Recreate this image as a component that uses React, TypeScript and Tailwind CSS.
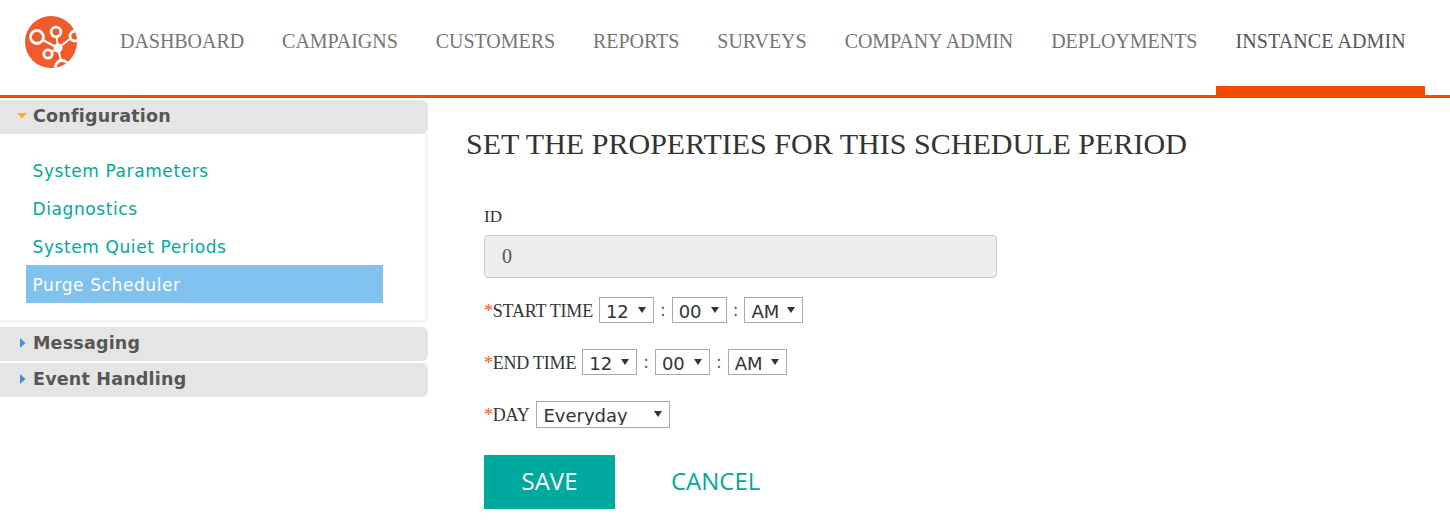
import { useId } from "react";

const serif = "font-['Liberation_Serif',serif]";
const sideFont = "font-['DejaVu_Sans',sans-serif]";

const navItems = ["DASHBOARD", "CAMPAIGNS", "CUSTOMERS", "REPORTS", "SURVEYS", "COMPANY ADMIN", "DEPLOYMENTS"];

const Logo = () => {
  const clip = useId();
  return (
    <svg width="52" height="52" viewBox="0 0 52 52" className="shrink-0">
      <defs>
        <clipPath id={clip}>
          <circle cx="26" cy="26" r="26" />
        </clipPath>
      </defs>
      <circle cx="26" cy="26" r="26" fill="#f15a2b" />
      <g clipPath={`url(#${clip})`} stroke="#fff" fill="none">
        <path d="M33 32 L12 21 M33 32 L31 16 M33 32 L49 20 M33 32 L23 38 M33 32 L37 49" strokeWidth="2" />
        <circle cx="12" cy="21" r="6.5" strokeWidth="2.8" fill="#f15a2b" />
        <circle cx="31" cy="16" r="4.8" strokeWidth="2.8" fill="#f15a2b" />
        <circle cx="50" cy="20" r="5" strokeWidth="2.8" fill="#f15a2b" />
        <circle cx="23" cy="38" r="4.2" strokeWidth="2.8" fill="#f15a2b" />
        <circle cx="37" cy="51" r="6.5" strokeWidth="2.8" fill="#f15a2b" />
        <circle cx="33" cy="32" r="4.5" fill="#fff" stroke="none" />
      </g>
    </svg>
  );
};

const SideHeader = ({ title, open }: { title: string; open?: boolean }) => (
  <div className="flex h-[34px] items-center rounded-r-md bg-[#e5e5e5] pb-[2px] pl-[20px]">
    {open ? (
      <svg width="10" height="6" viewBox="0 0 10 6" className="ml-[-3px] mr-[6px]">
        <path d="M0 0 L10 0 L5 5.5 Z" fill="#fcb316" />
      </svg>
    ) : (
      <svg width="6" height="10" viewBox="0 0 6 10" className="mr-[7px]">
        <path d="M0 0 L5.5 5 L0 10 Z" fill="#4a90d0" />
      </svg>
    )}
    <span className={`${sideFont} text-[17.5px] font-bold tracking-[0.2px] text-[#565656]`}>{title}</span>
  </div>
);

const SideLink = ({ label, active }: { label: string; active?: boolean }) => (
  <div
    className={`flex h-[38px] items-center pl-[6.5px] pt-[3px] ${sideFont} text-[17px] tracking-[0.6px] ${
      active ? "bg-[#80c1ed] text-white" : "text-[#00a99d]"
    }`}
  >
    {label}
  </div>
);

const Select = ({ value, size }: { value: string; size: string }) => (
  <div className={`relative ${size}`}>
    <select
      defaultValue={value}
      className={`h-full w-full appearance-none rounded-none border border-[#a9a9a9] bg-white pb-[2px] pl-[6px] ${sideFont} text-[18px] text-[#333]`}
    >
      <option>{value}</option>
    </select>
    <svg width="8" height="6" viewBox="0 0 8 6" className="pointer-events-none absolute right-[8px] top-[10px]">
      <path d="M0 0 L8 0 L4 6 Z" fill="#333" />
    </svg>
  </div>
);

const Required = () => <span className="text-[#f15a2b]">*</span>;

const Label = ({ text }: { text: string }) => (
  <span className={`${serif} mr-[6px] pt-[2px] text-[18px] tracking-[-0.22px] text-[#333]`}>
    <Required />
    {text}
  </span>
);

const TimeRow = ({ label }: { label: string }) => (
  <div className="mb-[26px] flex h-[26px] items-center">
    <Label text={label} />
    <Select value="12" size="h-[26px] w-[55px]" />
    <span className={`${sideFont} mx-[6px] pt-[1px] text-[17px] text-[#555]`}>:</span>
    <Select value="00" size="h-[26px] w-[55px]" />
    <span className={`${sideFont} mx-[6px] pt-[1px] text-[17px] text-[#555]`}>:</span>
    <Select value="AM" size="h-[26px] w-[59px]" />
  </div>
);

export default function App() {
  return (
    <div className="h-[524px] w-[1450px] overflow-hidden bg-white">
      <header className="flex h-[98px] items-start border-b-[3px] border-[#f34b00] pl-[25px]">
        <div className="mt-[16px]">
          <Logo />
        </div>
        <nav className={`ml-[24px] flex h-[95px] ${serif} text-[20px]`}>
          {navItems.map((item) => (
            <a key={item} className="px-[19px] pt-[26px] tracking-[-0.04px] text-[#757575]">
              {item}
            </a>
          ))}
          <a className="h-[98px] border-b-[12px] border-[#f34b00] px-[19px] pt-[26px] tracking-[0.1px] text-[#555]">
            INSTANCE ADMIN
          </a>
        </nav>
      </header>

      <div className="flex">
        <aside className="mt-[2px] w-[428px] shrink-0">
          <SideHeader title="Configuration" open />
          <div className="flex h-[189px] flex-col rounded-br-md border-b-[3px] border-r-[3px] border-[#f4f4f4] pl-[26px] pt-[17px]">
            <div className="w-[357px]">
              <SideLink label="System Parameters" />
              <SideLink label="Diagnostics" />
              <SideLink label="System Quiet Periods" />
              <SideLink label="Purge Scheduler" active />
            </div>
          </div>
          <div className="mt-[4px]">
            <SideHeader title="Messaging" />
          </div>
          <div className="mt-[2px]">
            <SideHeader title="Event Handling" />
          </div>
        </aside>

        <main className="ml-[38px]">
          <h1 className={`${serif} mt-[27px] text-[30px] leading-[38px] tracking-[0.02px] text-[#333]`}>
            SET THE PROPERTIES FOR THIS SCHEDULE PERIOD
          </h1>
          <div className="ml-[18px] mt-[42px]">
            <label className={`${serif} block text-[17px] leading-[24px] text-[#333]`}>ID</label>
            <div
              className={`mt-[6px] flex h-[43px] w-[513px] items-center rounded border border-[#ccc] bg-[#eee] pb-[2px] pl-[17px] ${serif} text-[20px] text-[#555]`}
            >
              0
            </div>
            <div className="mt-[19px]">
              <TimeRow label="START TIME" />
              <TimeRow label="END TIME" />
              <div className="flex h-[27px] items-center">
                <Label text="DAY" />
                <div className="ml-[1px]">
                  <Select value="Everyday" size="h-[27px] w-[134px]" />
                </div>
              </div>
            </div>
            <div className="mt-[27px] flex items-center">
              <button className="h-[54px] w-[131px] bg-[#00a99d] pb-[2px] font-['Open_Sans',sans-serif] text-[24px] text-white">
                SAVE
              </button>
              <a className="ml-[56px] pb-[2px] font-['Open_Sans',sans-serif] text-[24px] text-[#00a99d]">CANCEL</a>
            </div>
          </div>
        </main>
      </div>
    </div>
  );
}
